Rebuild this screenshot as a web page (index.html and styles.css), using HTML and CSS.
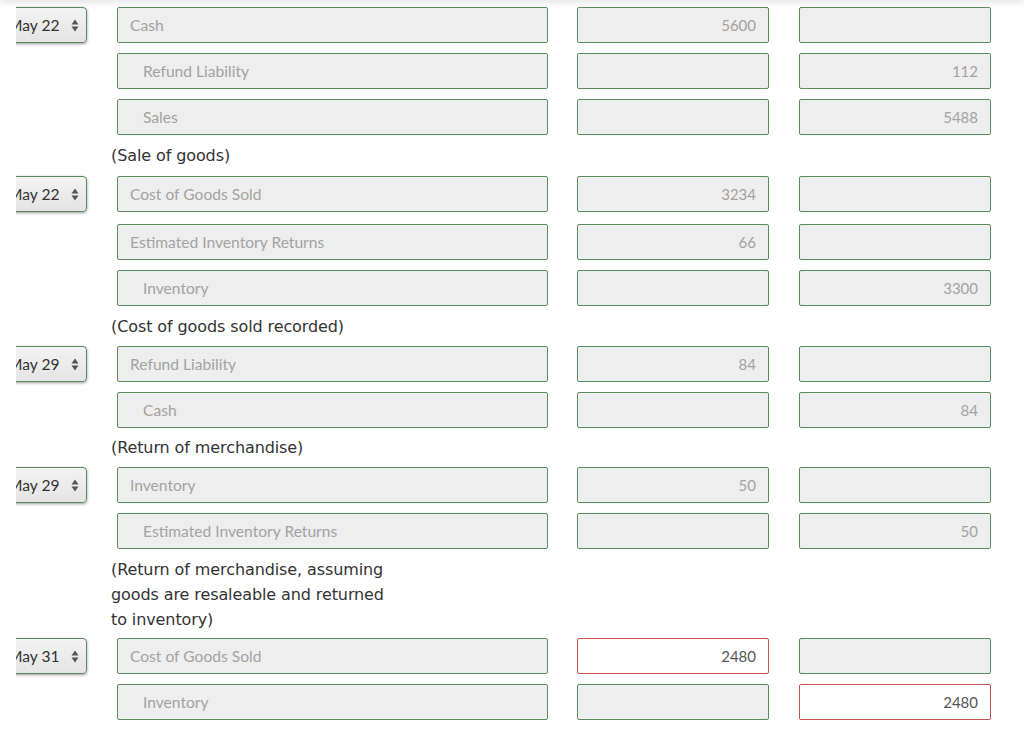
FILE: index.html
```html
<!DOCTYPE html>
<html>
<head>
<meta charset="utf-8">
<link rel="stylesheet" href="styles.css">
</head>
<body>
<div class="topshade"></div>
<div class="viewport">
  <div class="sheet">

    <div class="row">
      <div class="datecell"><div class="sel">May 22<svg class="arr" width="8" height="13" viewBox="0 0 8 13"><path d="M4 0.5 L7.5 5.5 L0.5 5.5 Z M4 12.5 L7.5 7.5 L0.5 7.5 Z" fill="#555"/></svg></div></div>
      <div class="fld acct">Cash</div>
      <div class="fld num">5600</div>
      <div class="fld num"></div>
    </div>
    <div class="row">
      <div class="datecell"></div>
      <div class="fld acct cr">Refund Liability</div>
      <div class="fld num"></div>
      <div class="fld num">112</div>
    </div>
    <div class="row">
      <div class="datecell"></div>
      <div class="fld acct cr">Sales</div>
      <div class="fld num"></div>
      <div class="fld num">5488</div>
    </div>
    <div class="note n1">(Sale of goods)</div>

    <div class="row">
      <div class="datecell"><div class="sel">May 22<svg class="arr" width="8" height="13" viewBox="0 0 8 13"><path d="M4 0.5 L7.5 5.5 L0.5 5.5 Z M4 12.5 L7.5 7.5 L0.5 7.5 Z" fill="#555"/></svg></div></div>
      <div class="fld acct">Cost of Goods Sold</div>
      <div class="fld num">3234</div>
      <div class="fld num"></div>
    </div>
    <div class="row extra">
      <div class="datecell"></div>
      <div class="fld acct">Estimated Inventory Returns</div>
      <div class="fld num">66</div>
      <div class="fld num"></div>
    </div>
    <div class="row">
      <div class="datecell"></div>
      <div class="fld acct cr">Inventory</div>
      <div class="fld num"></div>
      <div class="fld num">3300</div>
    </div>
    <div class="note">(Cost of goods sold recorded)</div>

    <div class="row">
      <div class="datecell"><div class="sel">May 29<svg class="arr" width="8" height="13" viewBox="0 0 8 13"><path d="M4 0.5 L7.5 5.5 L0.5 5.5 Z M4 12.5 L7.5 7.5 L0.5 7.5 Z" fill="#555"/></svg></div></div>
      <div class="fld acct">Refund Liability</div>
      <div class="fld num">84</div>
      <div class="fld num"></div>
    </div>
    <div class="row">
      <div class="datecell"></div>
      <div class="fld acct cr">Cash</div>
      <div class="fld num"></div>
      <div class="fld num">84</div>
    </div>
    <div class="note n3">(Return of merchandise)</div>

    <div class="row">
      <div class="datecell"><div class="sel">May 29<svg class="arr" width="8" height="13" viewBox="0 0 8 13"><path d="M4 0.5 L7.5 5.5 L0.5 5.5 Z M4 12.5 L7.5 7.5 L0.5 7.5 Z" fill="#555"/></svg></div></div>
      <div class="fld acct">Inventory</div>
      <div class="fld num">50</div>
      <div class="fld num"></div>
    </div>
    <div class="row">
      <div class="datecell"></div>
      <div class="fld acct cr">Estimated Inventory Returns</div>
      <div class="fld num"></div>
      <div class="fld num">50</div>
    </div>
    <div class="note n4">(Return of merchandise, assuming goods are resaleable and returned to inventory)</div>

    <div class="row">
      <div class="datecell"><div class="sel">May 31<svg class="arr" width="8" height="13" viewBox="0 0 8 13"><path d="M4 0.5 L7.5 5.5 L0.5 5.5 Z M4 12.5 L7.5 7.5 L0.5 7.5 Z" fill="#555"/></svg></div></div>
      <div class="fld acct">Cost of Goods Sold</div>
      <div class="fld num bad">2480</div>
      <div class="fld num"></div>
    </div>
    <div class="row">
      <div class="datecell"></div>
      <div class="fld acct cr">Inventory</div>
      <div class="fld num"></div>
      <div class="fld num bad">2480</div>
    </div>

  </div>
</div>
</body>
</html>
```

FILE: styles.css
```css
html, body {
  margin: 0;
  padding: 0;
  background: #fff;
}
body {
  font-family: Lato, "Open Sans", sans-serif;
  height: 749px;
  overflow: hidden;
}
.topshade {
  height: 0;
  box-shadow: 0 0 6px 1px rgba(0, 0, 0, 0.3);
  position: relative;
  z-index: 2;
}
.viewport {
  margin-left: 16px;
  overflow: hidden;
}
.sheet {
  margin-left: -16px;
  padding-top: 7px;
}
.row {
  display: flex;
  height: 36px;
  margin-bottom: 10px;
}
.row.extra {
  margin-top: 12px;
}
.datecell {
  width: 87px;
  flex: 0 0 87px;
  margin-right: 30px;
}
.sel {
  box-sizing: border-box;
  height: 36px;
  width: 87px;
  border: 1px solid #5a8a5a;
  border-radius: 4px;
  background: linear-gradient(#f3f3f3, #e4e4e4);
  box-shadow: 0 1px 3px rgba(0, 0, 0, 0.4);
  display: flex;
  align-items: center;
  padding-left: 7px;
  font-size: 15.6px;
  color: #333;
}
.arr {
  margin-left: auto;
  margin-right: 7px;
}
.fld {
  box-sizing: border-box;
  height: 36px;
  border: 1px solid #5a8d5a;
  border-radius: 2px;
  background: #eeeeee;
  display: flex;
  align-items: center;
  font-size: 15.6px;
  color: #a3a3a3;
}
.acct {
  width: 431px;
  flex: 0 0 431px;
  padding-left: 12px;
  margin-right: 29px;
}
.acct.cr {
  padding-left: 25px;
}
.num {
  width: 192px;
  flex: 0 0 192px;
  justify-content: flex-end;
  padding-right: 12px;
  font-size: 15px;
}
.num + .num {
  margin-left: 30px;
}
.num.bad {
  border-color: #c9534f;
  background: #fff;
  color: #555;
}
.note {
  font-family: "DejaVu Sans", Verdana, sans-serif;
  font-size: 16px;
  letter-spacing: -0.1px;
  line-height: 25px;
  color: #333;
  margin: -2px 0 7px 111px;
  width: 285px;
}
.note.n1 {
  margin-bottom: 8px;
}
.note.n3 {
  margin-top: -3px;
}
.note.n4 {
  margin-bottom: 6px;
}
```
